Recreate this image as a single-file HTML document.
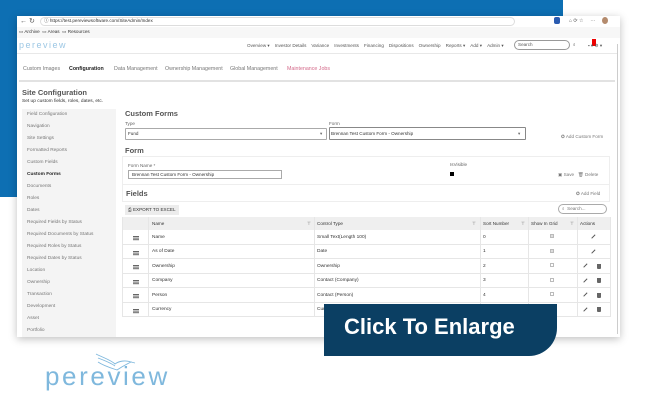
<!DOCTYPE html>
<html><head><meta charset="utf-8"><style>
*{margin:0;padding:0;box-sizing:border-box}
body{width:647px;height:408px;overflow:hidden;background:#fff;position:relative;font-family:"Liberation Sans",Arial,sans-serif;color:#444}
.a{position:absolute;white-space:nowrap}
.s{font-size:4.6px;color:#666}
.nav span{margin-right:5px}
.sb div{position:absolute;left:5px;font-size:4.8px;color:#777}
.row{position:absolute;left:122px;width:488px;height:14.5px;border-bottom:1px solid #e6e6e6;font-size:4.8px;color:#333}
.row span{position:absolute;top:4.5px}
.vl{position:absolute;top:217px;height:100px;width:1px;background:#e6e6e6}
.bar{position:absolute;left:11px;top:6px;width:6px;height:1px;background:#666;box-shadow:0 1.6px #666,0 3.2px #666}
.pen{position:absolute;top:6px;width:5px;height:1.3px;background:#555;transform:rotate(-45deg)}
.tr{position:absolute;top:4.5px;width:4px;height:5px;background:#666;border-radius:0 0 1px 1px}
.cb{position:absolute;left:551px;top:4px;width:4px;height:4px;border:0.7px solid #bbb}
</style></head><body>
<div class="a" style="left:0;top:0;width:563px;height:197px;background:#0d6fb3"></div>
<div class="a" style="left:17px;top:16px;width:603px;height:321px;background:#fff;box-shadow:0 2px 8px rgba(0,0,0,.25)"></div>
<div class="a" style="left:17px;top:16px;width:603px;height:11px;background:#fff"></div>
<div class="a" style="left:20px;top:17px;font-size:7px;color:#555">← ↻</div>
<div class="a" style="left:40px;top:17px;width:475px;height:9px;border-radius:5px;background:#fff;border:0.6px solid #ddd"></div>
<div class="a s" style="left:44px;top:18px;font-size:4.6px;color:#333">ⓘ https://test.pereviewsoftware.com/SiteAdmin/Index</div>
<div class="a" style="left:554px;top:17px;width:6px;height:7px;background:#2a5bb0;border-radius:2px"></div>
<div class="a" style="left:602px;top:17px;width:6px;height:7px;background:#b48b6d;border-radius:50%"></div>
<div class="a s" style="left:569px;top:18px;font-size:5px;color:#555">⌂ ⟳ ☆ &nbsp; &nbsp; ⋯</div>
<div class="a" style="left:17px;top:27px;width:603px;height:11px;background:#f7f7f7"></div>
<div class="a s" style="left:19px;top:29px;color:#333">▭ Archive &nbsp;▭ Areas &nbsp;▭ Resources</div>
<div class="a" style="left:17px;top:53px;width:600px;height:1px;background:#e8e8e8"></div>
<div class="a" style="left:19px;top:40px;font-size:9px;color:#9cc7e4;letter-spacing:1.5px">pereview</div>
<div class="a s nav" style="left:247px;top:43px;color:#555"><span>Overview ▾</span><span>Investor Details</span><span>Variance</span><span>Investments</span><span>Financing</span><span>Dispositions</span><span>Ownership</span><span>Reports ▾</span><span>Add ▾</span><span>Admin ▾</span></div>
<div class="a" style="left:514px;top:40px;width:56px;height:10px;border:0.7px solid #999;border-radius:5px"></div>
<div class="a s" style="left:518px;top:42px;color:#555">Search</div>
<div class="a s" style="left:573px;top:42px;color:#555">⌕</div>
<div class="a" style="left:592px;top:39px;width:4px;height:7px;background:#e00"></div>
<div class="a s" style="left:588px;top:43px;color:#555">▪ ▾ ⚙ ▾</div>
<div class="a" style="left:617px;top:44px;width:1px;height:290px;background:#ccc"></div>
<div class="a" style="left:23px;top:66px;font-size:5.3px;color:#777">Custom Images</div>
<div class="a" style="left:69px;top:66px;font-size:5.3px;color:#222;font-weight:bold">Configuration</div>
<div class="a" style="left:114px;top:66px;font-size:5.3px;color:#777">Data Management</div>
<div class="a" style="left:165px;top:66px;font-size:5.3px;color:#777">Ownership Management</div>
<div class="a" style="left:230px;top:66px;font-size:5.3px;color:#777">Global Management</div>
<div class="a" style="left:287px;top:66px;font-size:5.3px;color:#d46a8a">Maintenance Jobs</div>
<div class="a" style="left:19px;top:80px;width:596px;height:2px;background:#e2e2e2"></div>
<div class="a" style="left:22px;top:88px;font-size:7.5px;font-weight:bold;color:#555">Site Configuration</div>
<div class="a" style="left:22px;top:99px;font-size:4.8px;color:#333">Set up custom fields, roles, dates, etc.</div>
<div class="a sb" style="left:22px;top:109px;width:94px;height:228px;background:#f4f4f4">
<div style="top:3px">Field Configuration</div><div style="top:15px">Navigation</div><div style="top:27px">Site Settings</div><div style="top:39px">Formatted Reports</div><div style="top:51px">Custom Fields</div><div style="top:63px;color:#222;font-weight:bold">Custom Forms</div><div style="top:75px">Documents</div><div style="top:87px">Roles</div><div style="top:99px">Dates</div><div style="top:111px">Required Fields by Status</div><div style="top:123px">Required Documents by Status</div><div style="top:135px">Required Roles by Status</div><div style="top:147px">Required Dates by Status</div><div style="top:159px">Location</div><div style="top:171px">Ownership</div><div style="top:183px">Transaction</div><div style="top:195px">Development</div><div style="top:207px">Asset</div><div style="top:219px">Portfolio</div>
</div>
<div class="a" style="left:125px;top:109px;font-size:7.5px;font-weight:bold;color:#555">Custom Forms</div>
<div class="a s" style="left:125px;top:121px">Type</div>
<div class="a" style="left:125px;top:128px;width:202px;height:12px;border:0.7px solid #aaa;border-radius:1px"></div>
<div class="a s" style="left:128px;top:131px;color:#333">Fund</div>
<div class="a s" style="left:320px;top:131px">▾</div>
<div class="a s" style="left:329px;top:121px">Form</div>
<div class="a" style="left:329px;top:127px;width:197px;height:13px;border:0.9px solid #888;border-radius:1px"></div>
<div class="a s" style="left:331px;top:131px;color:#333">Brennan Test Custom Form - Ownership</div>
<div class="a s" style="left:518px;top:131px">▾</div>
<div class="a s" style="left:561px;top:134px;color:#777">✪ Add Custom Form</div>
<div class="a" style="left:125px;top:146px;font-size:7.5px;font-weight:bold;color:#555">Form</div>
<div class="a" style="left:122px;top:156px;width:488px;height:29px;border:0.7px solid #eee"></div>
<div class="a s" style="left:128px;top:163px">Form Name *</div>
<div class="a" style="left:128px;top:170px;width:154px;height:9px;border:0.7px solid #aaa"></div>
<div class="a s" style="left:132px;top:172px;color:#333">Brennan Test Custom Form - Ownership</div>
<div class="a s" style="left:450px;top:162px">IsVisible</div>
<div class="a" style="left:450px;top:172px;width:4px;height:4px;background:#000"></div>
<div class="a s" style="left:558px;top:172px;color:#777">▣ Save &nbsp; 🗑 Delete</div>
<div class="a" style="left:122px;top:185px;width:488px;height:17px;border:0.7px solid #eee;border-top:none"></div>
<div class="a" style="left:126px;top:189px;font-size:7.5px;font-weight:bold;color:#555">Fields</div>
<div class="a s" style="left:576px;top:191px;color:#777">✪ Add Field</div>
<div class="a" style="left:125px;top:205px;width:54px;height:10px;background:#ececec"></div>
<div class="a s" style="left:128px;top:207px;color:#333">⎙ EXPORT TO EXCEL</div>
<div class="a" style="left:558px;top:204px;width:49px;height:10px;border:0.7px solid #aaa;border-radius:5px"></div>
<div class="a s" style="left:562px;top:206px;color:#777">⌕ &nbsp;Search...</div>
<div class="a" style="left:122px;top:217px;width:488px;height:13px;background:#efefef"></div>
<div class="a s" style="left:152px;top:221px;color:#333">Name</div>
<div class="a s" style="left:307px;top:221px">⊤</div>
<div class="a s" style="left:317px;top:221px;color:#333">Control Type</div>
<div class="a s" style="left:472px;top:221px">⊤</div>
<div class="a s" style="left:483px;top:221px;color:#333">Sort Number</div>
<div class="a s" style="left:521px;top:221px">⊤</div>
<div class="a s" style="left:531px;top:221px;color:#333">Show In Grid</div>
<div class="a s" style="left:570px;top:221px">⊤</div>
<div class="a s" style="left:580px;top:221px;color:#333">Actions</div>
<div class="row" style="top:230px"><i class="bar"></i><span style="left:30px">Name</span><span style="left:195px">Small Text(Length 100)</span><span style="left:361px">0</span><i class="cb" style="left:428px;background:#ddd"></i><i class="pen" style="left:469px"></i></div>
<div class="row" style="top:244.5px"><i class="bar"></i><span style="left:30px">As of Date</span><span style="left:195px">Date</span><span style="left:361px">1</span><i class="cb" style="left:428px;background:#ddd"></i><i class="pen" style="left:469px"></i></div>
<div class="row" style="top:259px"><i class="bar"></i><span style="left:30px">Ownership</span><span style="left:195px">Ownership</span><span style="left:361px">2</span><i class="cb" style="left:428px"></i><i class="pen" style="left:461px"></i><i class="tr" style="left:475px"></i></div>
<div class="row" style="top:273.5px"><i class="bar"></i><span style="left:30px">Company</span><span style="left:195px">Contact (Company)</span><span style="left:361px">3</span><i class="cb" style="left:428px"></i><i class="pen" style="left:461px"></i><i class="tr" style="left:475px"></i></div>
<div class="row" style="top:288px"><i class="bar"></i><span style="left:30px">Person</span><span style="left:195px">Contact (Person)</span><span style="left:361px">4</span><i class="cb" style="left:428px"></i><i class="pen" style="left:461px"></i><i class="tr" style="left:475px"></i></div>
<div class="row" style="top:302.5px"><i class="bar"></i><span style="left:30px">Currency</span><span style="left:195px">Currency</span><i class="pen" style="left:461px"></i><i class="tr" style="left:475px"></i></div>
<div class="vl" style="left:148px"></div><div class="vl" style="left:314px"></div><div class="vl" style="left:480px"></div><div class="vl" style="left:528px"></div><div class="vl" style="left:577px"></div>
<div class="a" style="left:122px;top:217px;width:1px;height:100px;background:#e6e6e6"></div>
<div class="a" style="left:610px;top:217px;width:1px;height:100px;background:#e6e6e6"></div>
<div class="a" style="left:324px;top:304px;width:233px;height:52px;background:#0b3f63;border-radius:0 0 28px 0"></div>
<div class="a" style="left:344px;top:314px;font-size:22px;font-weight:bold;color:#fff">Click To Enlarge</div>
<svg class="a" style="left:94px;top:353px" width="46" height="18" viewBox="0 0 46 18"><g fill="none" stroke="#7fb8dd" stroke-width="0.9"><path d="M2 1 C10 5 17 7 21 11 C25 8 31 7 37 9 C33 11 29 13 23 17 C17 15 10 13 4 9"/><path d="M4 5 C12 8 17 10 21 13"/><path d="M37 9 L41 10"/></g></svg>
<div class="a" style="left:45px;top:361px;font-size:26px;color:#7fb8dd;letter-spacing:2.6px">pereview</div>
</body></html>
